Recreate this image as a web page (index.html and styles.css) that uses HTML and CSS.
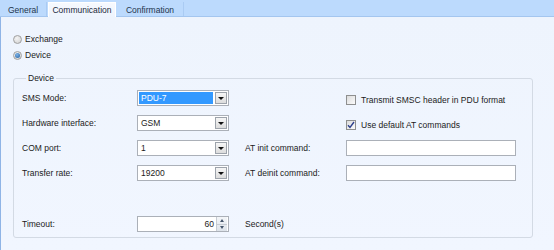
FILE: index.html
```html
<!DOCTYPE html>
<html>
<head>
<meta charset="utf-8">
<link rel="stylesheet" href="styles.css">
</head>
<body>
<div class="window">
  <div class="tabs">
    <div class="tab t-general">General</div>
    <div class="tab t-comm active">Communication</div>
    <div class="tab t-conf">Confirmation</div>
  </div>
  <div class="page">
    <div class="radios">
      <div class="radio"><span class="rb"></span><span>Exchange</span></div>
      <div class="radio"><span class="rb on"></span><span>Device</span></div>
    </div>
    <fieldset class="group">
      <legend>Device</legend>
      <div class="grid">
        <span class="lbl">SMS Mode:</span>
        <div class="combo sel"><span class="val">PDU-7</span><span class="btn"><i class="tri"></i></span></div>
        <span></span>
        <div class="chk"><span class="cb"></span><span>Transmit SMSC header in PDU format</span></div>

        <span class="lbl">Hardware interface:</span>
        <div class="combo"><span class="val">GSM</span><span class="btn"><i class="tri"></i></span></div>
        <span></span>
        <div class="chk"><span class="cb checked"><svg width="8" height="8" viewBox="0 0 8 8"><path d="M1 4.2 L3 6.5 L7 1" fill="none" stroke="#2c3f8c" stroke-width="1.4"/></svg></span><span>Use default AT commands</span></div>

        <span class="lbl">COM port:</span>
        <div class="combo"><span class="val">1</span><span class="btn"><i class="tri"></i></span></div>
        <span class="lbl lbl2">AT init command:</span>
        <div class="input"></div>

        <span class="lbl">Transfer rate:</span>
        <div class="combo"><span class="val">19200</span><span class="btn"><i class="tri"></i></span></div>
        <span class="lbl lbl2">AT deinit command:</span>
        <div class="input"></div>

        <span class="lbl late">Timeout:</span>
        <div class="spin late"><span class="num">60</span><span class="sbtn"><i class="up"></i><i class="dn"></i></span></div>
        <span class="lbl lbl2 late">Second(s)</span>
        <span class="late"></span>
      </div>
    </fieldset>
  </div>
</div>
</body>
</html>
```

FILE: styles.css
```css
html, body {
  margin: 0;
  padding: 0;
}
body {
  width: 554px;
  height: 250px;
  overflow: hidden;
  font-family: "Liberation Sans", Arial, sans-serif;
  font-size: 8.5px;
  color: #1b1b1b;
  background: #eef4fd;
}
.window {
  display: flex;
  flex-direction: column;
  height: 250px;
}
.tabs {
  height: 16px;
  display: flex;
  align-items: flex-end;
  gap: 1px;
  background: #bcdafd;
  border-bottom: 1px solid #a4c6ef;
  flex: none;
}
.tab {
  height: 14px;
  line-height: 16px;
  text-align: center;
  color: #22344c;
  box-sizing: border-box;
  border-right: 1px solid #aacbf3;
  overflow: hidden;
}
.t-general { width: 47px; }
.t-comm { width: 68px; }
.t-conf { width: 67px; }
.tab.active {
  height: 15px;
  margin-bottom: -1px;
  line-height: 15px;
  background: linear-gradient(#f6f9fe, #eef4fd);
  border: 1px solid #ffffff;
  border-bottom: none;
  color: #1c2a3c;
}
.page {
  flex: 1;
  border-left: 1px solid #8fb4e6;
  background: linear-gradient(#eef4fd, #f1f6ff);
  padding: 14px 0 0 12px;
}
.radios {
  display: flex;
  flex-direction: column;
}
.radio {
  height: 16px;
  display: flex;
  align-items: center;
  gap: 3px;
}
.rb {
  width: 9px;
  height: 9px;
  border-radius: 50%;
  box-sizing: border-box;
  border: 1px solid #a0a0a0;
  background: radial-gradient(circle at 40% 35%, #f4f4f4, #cfcfcf);
  display: flex;
  align-items: center;
  justify-content: center;
}
.rb.on::after {
  content: "";
  width: 5px;
  height: 5px;
  border-radius: 50%;
  background: radial-gradient(circle at 40% 35%, #7fb4e8, #1e5d9e);
}
.group {
  margin: 9px 0 0 0;
  width: 520px;
  box-sizing: border-box;
  border: 1px solid #d3dae4;
  border-radius: 3px;
  padding: 6px 8px 5px 8px;
  min-width: 0;
}
.group legend {
  padding: 0 2px;
  margin-left: 4px;
  line-height: 12px;
  color: #1b1b1b;
}
.grid {
  display: grid;
  grid-template-columns: 115px 92px 117px 170px;
  grid-template-rows: 16px 16px 16px 16px 42px;
  row-gap: 9px;
  align-items: center;
}
.lbl {
  white-space: nowrap;
}
.lbl2 {
  padding-left: 16px;
}
.late {
  margin-top: 26px;
}
.combo, .input, .spin {
  height: 16px;
  box-sizing: border-box;
  border: 1px solid #abb0b8;
  background: #ffffff;
  display: flex;
  align-items: center;
}
.combo .val {
  flex: 1;
  height: 12px;
  line-height: 12px;
  margin-left: 1px;
  padding-left: 2px;
}
.combo.sel .val {
  background: #3399ff;
  color: #ffffff;
}
.btn {
  width: 12px;
  height: 12px;
  box-sizing: border-box;
  margin: 0 1px 0 2px;
  border: 1px solid #9da3ab;
  background: linear-gradient(#f6f6f6, #dcdcdc);
  display: flex;
  align-items: center;
  justify-content: center;
}
.tri {
  width: 0;
  height: 0;
  border-left: 3px solid transparent;
  border-right: 3px solid transparent;
  border-top: 3px solid #111111;
}
.chk {
  display: flex;
  align-items: center;
  gap: 5px;
  padding-top: 4px;
  white-space: nowrap;
  grid-column: 4 / span 1;
}
.cb {
  width: 10px;
  height: 10px;
  box-sizing: border-box;
  border: 1px solid #8e8f8f;
  background: linear-gradient(135deg, #dcdcdc, #fbfbfb);
  display: flex;
  align-items: center;
  justify-content: center;
}
.spin .num {
  flex: 1;
  text-align: right;
  padding-right: 2px;
}
.sbtn {
  width: 10px;
  height: 14px;
  margin-right: 1px;
  display: flex;
  flex-direction: column;
  border-left: 1px solid #c7ccd3;
  background: linear-gradient(#f4f6f9, #dde3ea);
}
.sbtn i {
  flex: 1;
  display: flex;
  align-items: center;
  justify-content: center;
}
.sbtn .up::after {
  content: "";
  border-left: 2.5px solid transparent;
  border-right: 2.5px solid transparent;
  border-bottom: 3px solid #45556b;
}
.sbtn .dn {
  border-top: 1px solid #c7ccd3;
}
.sbtn .dn::after {
  content: "";
  border-left: 2.5px solid transparent;
  border-right: 2.5px solid transparent;
  border-top: 3px solid #45556b;
}
```
